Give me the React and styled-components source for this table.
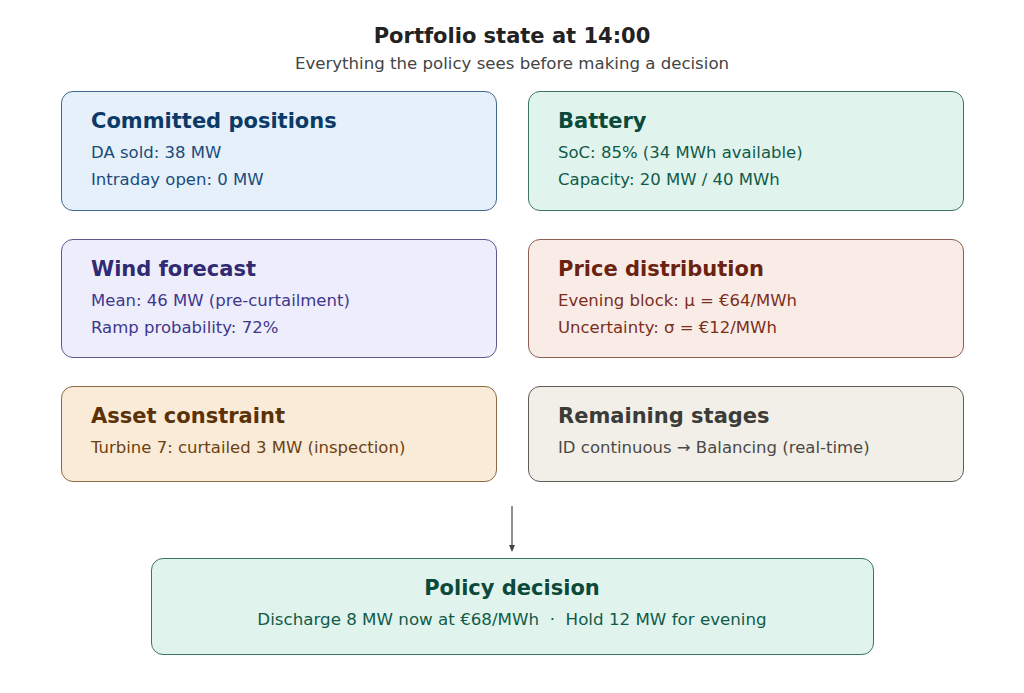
import React from "react";
import styled, { createGlobalStyle } from "styled-components";

const Global = createGlobalStyle`
  html, body { margin: 0; padding: 0; background: #ffffff; }
  body { font-family: "DejaVu Sans", "Liberation Sans", sans-serif; }
`;

const Page = styled.div`
  width: 1024px;
  height: 693px;
  display: flex;
  flex-direction: column;
  align-items: center;
  padding-top: 23px;
  box-sizing: border-box;
`;

const Title = styled.h1`
  margin: 0;
  font-size: 21px;
  line-height: 26px;
  font-weight: bold;
  color: #222222;
`;

const Subtitle = styled.p`
  margin: 5px 0 0;
  font-size: 16.6px;
  line-height: 20px;
  color: #444444;
`;

const Grid = styled.div`
  margin-top: 17px;
  margin-left: 1px;
  display: grid;
  grid-template-columns: 436px 436px;
  grid-template-rows: 120px 119px 96px;
  column-gap: 31px;
  row-gap: 28px;
`;

const Card = styled.div`
  box-sizing: border-box;
  border: 1px solid ${(p) => p.$border};
  background: ${(p) => p.$bg};
  border-radius: 12px;
  padding: 16px 29px 0;
  display: flex;
  flex-direction: column;
  align-items: ${(p) => (p.$center ? "center" : "flex-start")};
`;

const CardTitle = styled.div`
  font-size: 21px;
  line-height: 26px;
  font-weight: bold;
  color: ${(p) => p.$color};
  margin-bottom: 5px;
`;

const Line = styled.div`
  font-size: ${(p) => p.$size || "16.5px"};
  line-height: 27px;
  color: ${(p) => p.$color};
  white-space: pre;
`;

const ArrowWrap = styled.div`
  height: 76px;
  display: flex;
  justify-content: center;
  align-items: flex-start;
`;

const Decision = styled(Card)`
  width: 723px;
  height: 97px;
  padding-top: 16px;
`;

const themes = {
  blue: { bg: "#e5f0fa", border: "#3d6a93", title: "#0c3a67", text: "#1b4b7b" },
  green: { bg: "#e0f4ed", border: "#3d7565", title: "#0b4a3a", text: "#125a48" },
  purple: { bg: "#eeedfb", border: "#5d5a92", title: "#2f2a72", text: "#3d388c" },
  red: { bg: "#f9ece7", border: "#8a5e50", title: "#6c2210", text: "#7b2f1b" },
  amber: { bg: "#faebd8", border: "#8c6b3e", title: "#5a3206", text: "#6b4210" },
  gray: { bg: "#f2efe9", border: "#5e5d58", title: "#3b3b37", text: "#4a4a45" },
};

const cards = [
  { t: "blue", title: "Committed positions", lines: ["DA sold: 38 MW", "Intraday open: 0 MW"] },
  { t: "green", title: "Battery", lines: ["SoC: 85% (34 MWh available)", "Capacity: 20 MW / 40 MWh"] },
  { t: "purple", title: "Wind forecast", lines: ["Mean: 46 MW (pre-curtailment)", "Ramp probability: 72%"] },
  { t: "red", title: "Price distribution", lines: ["Evening block: μ = €64/MWh", "Uncertainty: σ = €12/MWh"] },
  { t: "amber", title: "Asset constraint", lines: ["Turbine 7: curtailed 3 MW (inspection)"] },
  { t: "gray", title: "Remaining stages", lines: ["ID continuous → Balancing (real-time)"] },
];

export default function App() {
  const g = themes.green;
  return (
    <>
      <Global />
      <Page>
        <Title>Portfolio state at 14:00</Title>
        <Subtitle>Everything the policy sees before making a decision</Subtitle>
        <Grid>
          {cards.map((c) => {
            const th = themes[c.t];
            return (
              <Card key={c.title} $bg={th.bg} $border={th.border}>
                <CardTitle $color={th.title}>{c.title}</CardTitle>
                {c.lines.map((l) => (
                  <Line key={l} $color={th.text}>{l}</Line>
                ))}
              </Card>
            );
          })}
        </Grid>
        <ArrowWrap>
          <svg width="12" height="76" viewBox="0 0 12 76">
            <line x1="6" y1="24" x2="6" y2="66" stroke="#444" strokeWidth="1.2" />
            <path d="M3 63 L6 70 L9 63 Z" fill="#444" />
          </svg>
        </ArrowWrap>
        <Decision $bg={g.bg} $border={g.border} $center>
          <CardTitle $color={g.title}>Policy decision</CardTitle>
          <Line $color={g.text} $size="16.7px">{"Discharge 8 MW now at €68/MWh  ·  Hold 12 MW for evening"}</Line>
        </Decision>
      </Page>
    </>
  );
}
